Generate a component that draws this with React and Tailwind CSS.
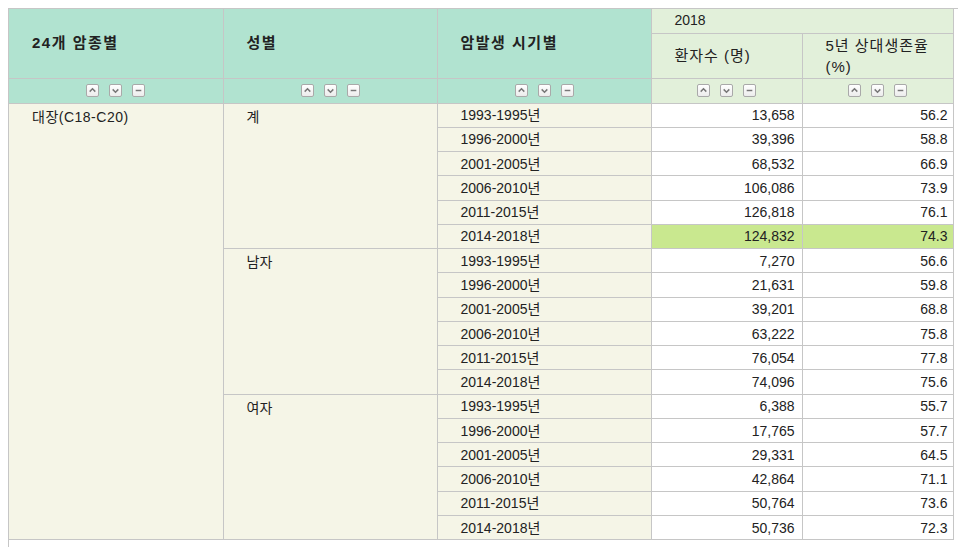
import React from 'react';

const groups = [
    {
        sex: '계',
        rows: [
            ['1993-1995년', '13,658', '56.2'],
            ['1996-2000년', '39,396', '58.8'],
            ['2001-2005년', '68,532', '66.9'],
            ['2006-2010년', '106,086', '73.9'],
            ['2011-2015년', '126,818', '76.1'],
            ['2014-2018년', '124,832', '74.3', true],
        ],
    },
    {
        sex: '남자',
        rows: [
            ['1993-1995년', '7,270', '56.6'],
            ['1996-2000년', '21,631', '59.8'],
            ['2001-2005년', '39,201', '68.8'],
            ['2006-2010년', '63,222', '75.8'],
            ['2011-2015년', '76,054', '77.8'],
            ['2014-2018년', '74,096', '75.6'],
        ],
    },
    {
        sex: '여자',
        rows: [
            ['1993-1995년', '6,388', '55.7'],
            ['1996-2000년', '17,765', '57.7'],
            ['2001-2005년', '29,331', '64.5'],
            ['2006-2010년', '42,864', '71.1'],
            ['2011-2015년', '50,764', '73.6'],
            ['2014-2018년', '50,736', '72.3'],
        ],
    },
];

const SortButtons = () => (
    <div className="flex items-center justify-center gap-[10px]">
        {['up', 'down', 'minus'].map((k) => (
            <span key={k} className="w-[13px] h-[13px] rounded-[2px] border border-[#a9a9a9] bg-gradient-to-b from-white to-[#ececec] flex items-center justify-center">
                <svg width="9" height="9" viewBox="0 0 8 8">
                    {k === 'up' && <path d="M1.5 5 L4 2.5 L6.5 5" fill="none" stroke="#777" strokeWidth="1.3" />}
                    {k === 'down' && <path d="M1.5 3 L4 5.5 L6.5 3" fill="none" stroke="#777" strokeWidth="1.3" />}
                    {k === 'minus' && <path d="M1.5 4 H6.5" fill="none" stroke="#777" strokeWidth="1.3" />}
                </svg>
            </span>
        ))}
    </div>
);

const cell = 'border-r border-b border-[#c6c6c6]';

export default function App() {
    return (
        <div className="w-[960px] h-[547px] bg-white overflow-hidden pt-2 pl-2" style={{ fontFamily: '"Liberation Sans", "Noto Sans CJK KR", sans-serif' }}>
            <div className="w-[950px] h-[539px] border-l border-t border-[#c6c6c6]">
                <table className="table-fixed border-collapse w-[944px] text-[#222]">
                    <colgroup>
                        <col className="w-[214px]" />
                        <col className="w-[214px]" />
                        <col className="w-[214px]" />
                        <col className="w-[151px]" />
                        <col className="w-[151px]" />
                    </colgroup>
                    <thead>
                        <tr className="h-[24px]">
                            <th rowSpan={2} className={`${cell} bg-[#b1e3d0] text-left align-middle pl-[23px] text-[15px] tracking-[1.5px] font-bold`}>24개 암종별</th>
                            <th rowSpan={2} className={`${cell} bg-[#b1e3d0] text-left align-middle pl-[23px] text-[15px] tracking-[1.5px] font-bold`}>성별</th>
                            <th rowSpan={2} className={`${cell} bg-[#b1e3d0] text-left align-middle pl-[23px] text-[15px] tracking-[1.5px] font-bold`}>암발생 시기별</th>
                            <th colSpan={2} className={`${cell} bg-[#e2f0da] text-left pl-[23px] text-[14px] font-normal`}>2018</th>
                        </tr>
                        <tr className="h-[45px]">
                            <th className={`${cell} bg-[#e2f0da] text-left pl-[23px] text-[15px] tracking-[1px] font-normal leading-[19px]`}>환자수 (명)</th>
                            <th className={`${cell} bg-[#e2f0da] text-left pl-[23px] text-[15px] tracking-[1px] font-normal leading-[21px]`}>5년 상대생존율<br />(%)</th>
                        </tr>
                        <tr className="h-[25px]">
                            <th className={`${cell} bg-[#b1e3d0]`}><SortButtons /></th>
                            <th className={`${cell} bg-[#b1e3d0]`}><SortButtons /></th>
                            <th className={`${cell} bg-[#b1e3d0]`}><SortButtons /></th>
                            <th className={`${cell} bg-[#e2f0da]`}><SortButtons /></th>
                            <th className={`${cell} bg-[#e2f0da]`}><SortButtons /></th>
                        </tr>
                    </thead>
                    <tbody className="text-[14px]">
                        {groups.map((g, gi) =>
                            g.rows.map((r, ri) => (
                                <tr key={`${gi}-${ri}`} className="h-[24.28px]">
                                    {gi === 0 && ri === 0 && (
                                        <td rowSpan={18} className={`${cell} bg-[#f5f5e7] align-top pl-[23px] pt-[3px] tracking-[0.5px]`}>대장(C18-C20)</td>
                                    )}
                                    {ri === 0 && (
                                        <td rowSpan={6} className={`${cell} bg-[#f5f5e7] align-top pl-[23px] pt-[3px]`}>{g.sex}</td>
                                    )}
                                    <td className={`${cell} bg-[#f5f5e7] pl-[23px] leading-none`}>{r[0]}</td>
                                    <td className={`${cell} ${r[3] ? 'bg-[#c9e88f]' : 'bg-white'} text-right pr-[7px] leading-none`}>{r[1]}</td>
                                    <td className={`${cell} ${r[3] ? 'bg-[#c9e88f]' : 'bg-white'} text-right pr-[5px] leading-none`}>{r[2]}</td>
                                </tr>
                            ))
                        )}
                    </tbody>
                </table>
            </div>
        </div>
    );
}
